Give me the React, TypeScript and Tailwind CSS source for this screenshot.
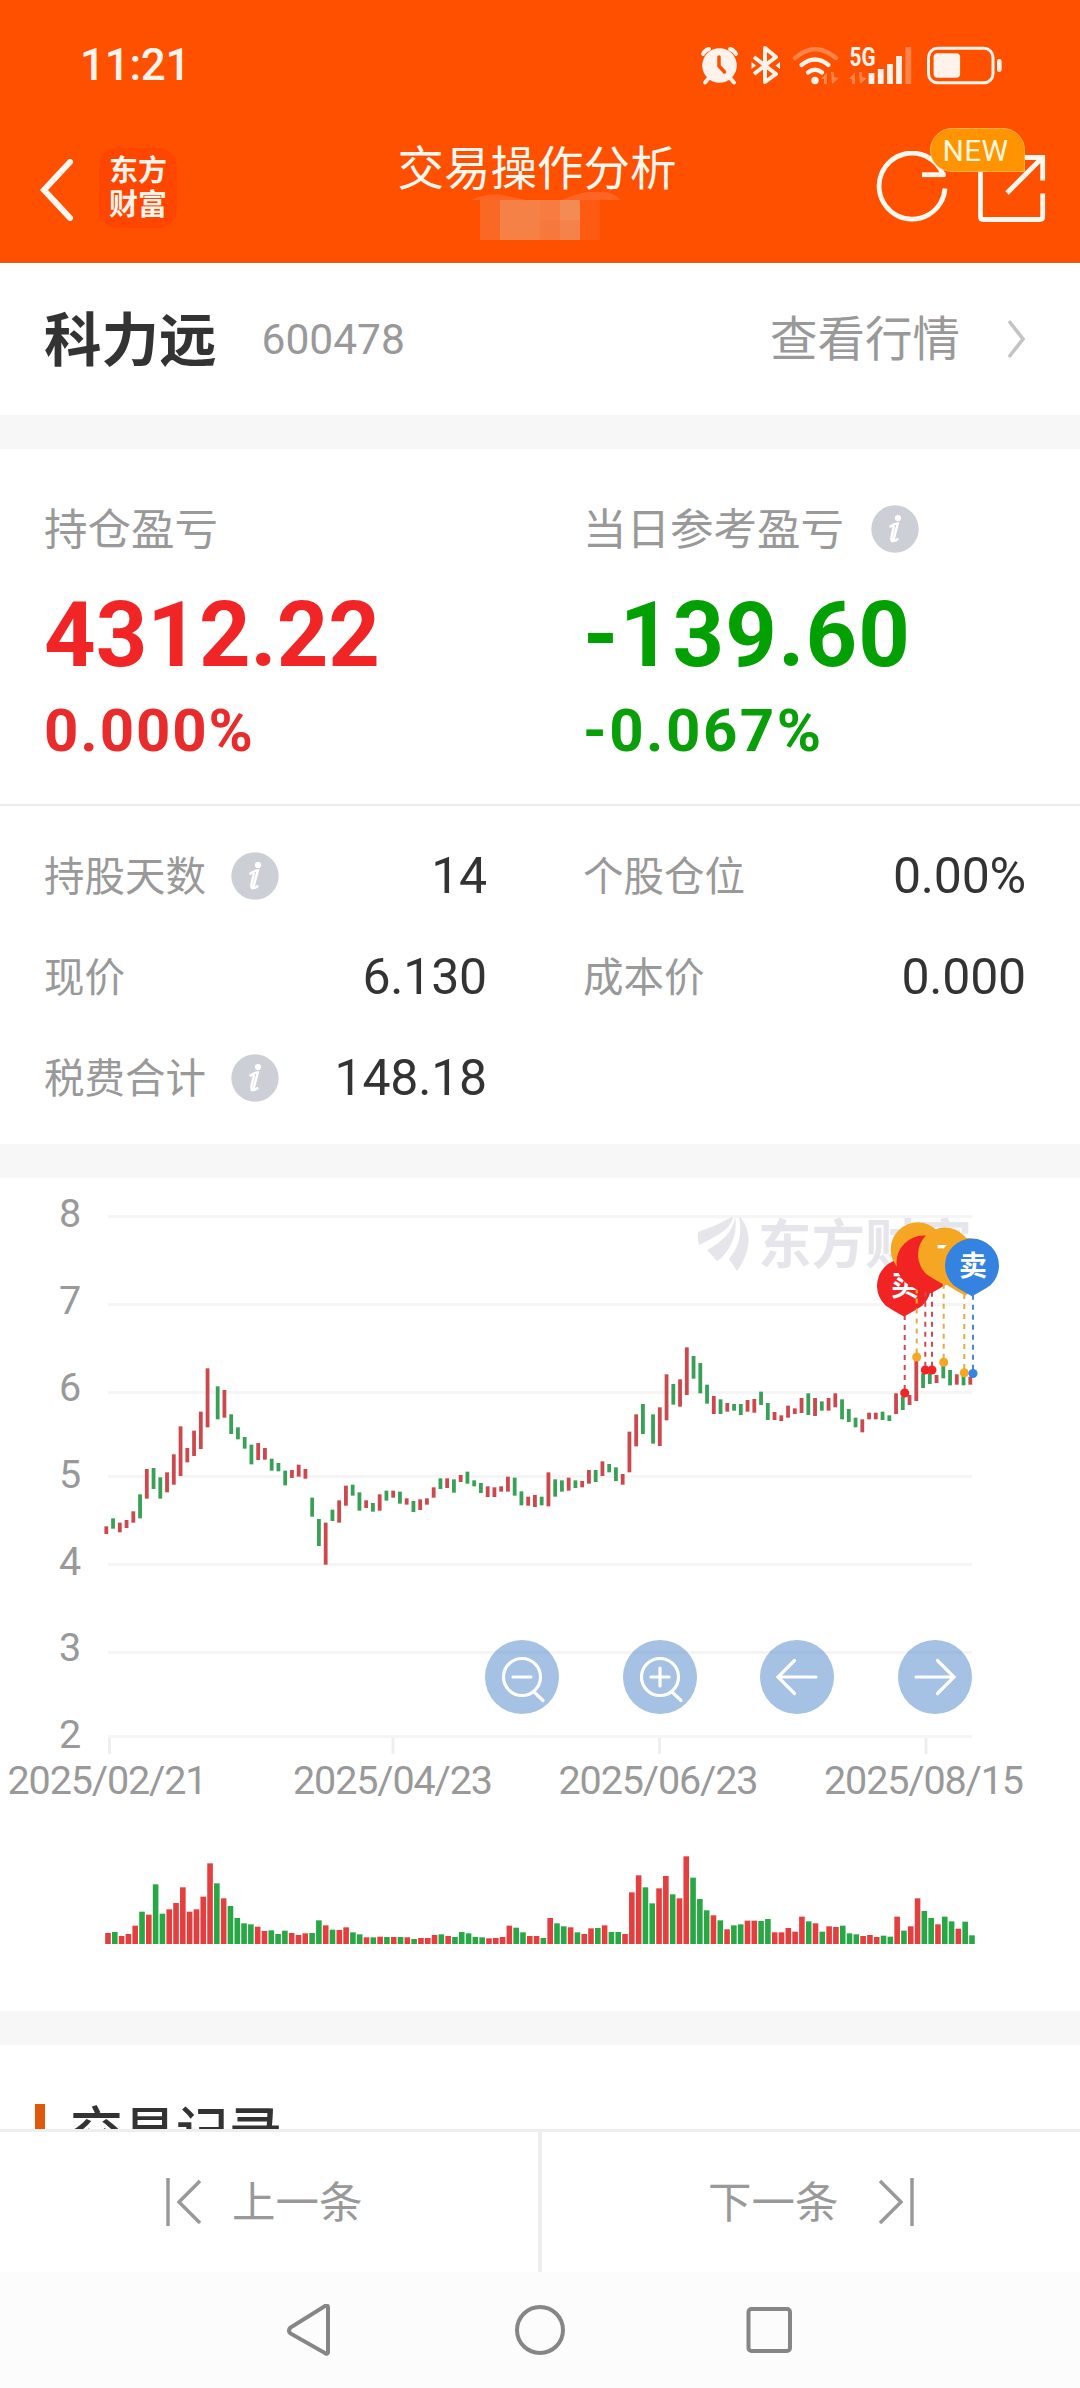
import { ReactNode } from "react";

// [máximo, mínimo, color] en tercios de pixel desde y = 1300
const velas: [number, number, "r" | "g"][] = [
  [679, 702, "r"], [655, 686, "g"], [668, 697, "r"], [660, 684, "r"], [634, 668, "r"], [583, 655, "g"], [507, 596, "r"], [504, 567, "g"],
  [532, 596, "g"], [517, 577, "r"], [463, 554, "r"], [379, 528, "r"], [444, 487, "r"], [392, 468, "r"], [335, 447, "r"], [205, 382, "r"],
  [259, 358, "g"], [270, 353, "r"], [343, 402, "g"], [382, 418, "g"], [411, 446, "g"], [434, 493, "g"], [429, 480, "r"], [444, 479, "r"],
  [476, 512, "g"], [489, 514, "g"], [512, 556, "g"], [510, 534, "r"], [494, 530, "r"], [507, 536, "r"], [593, 650, "g"], [657, 738, "g"],
  [668, 794, "r"], [629, 663, "g"], [601, 668, "r"], [557, 617, "r"], [554, 587, "g"], [577, 632, "g"], [601, 624, "r"], [609, 635, "g"],
  [583, 632, "r"], [572, 602, "g"], [572, 593, "r"], [575, 611, "g"], [595, 614, "r"], [603, 636, "g"], [598, 630, "r"], [595, 614, "r"],
  [562, 593, "r"], [535, 567, "g"], [535, 564, "r"], [538, 578, "g"], [525, 546, "r"], [515, 551, "g"], [541, 559, "g"], [549, 579, "g"],
  [559, 591, "r"], [562, 591, "r"], [559, 575, "r"], [530, 575, "r"], [533, 587, "g"], [574, 616, "g"], [590, 617, "r"], [585, 621, "r"],
  [590, 616, "g"], [517, 619, "r"], [538, 590, "g"], [541, 575, "g"], [533, 572, "r"], [541, 564, "g"], [543, 562, "r"], [510, 551, "r"],
  [510, 546, "g"], [484, 528, "r"], [492, 517, "g"], [502, 543, "g"], [522, 554, "r"], [395, 517, "r"], [343, 439, "r"], [312, 402, "g"],
  [343, 431, "g"], [322, 438, "r"], [223, 361, "r"], [252, 314, "g"], [238, 320, "r"], [142, 285, "r"], [168, 236, "g"], [189, 280, "g"],
  [254, 311, "g"], [288, 342, "r"], [298, 342, "g"], [309, 335, "r"], [312, 332, "g"], [312, 345, "g"], [300, 335, "r"], [297, 338, "r"],
  [275, 315, "g"], [309, 360, "g"], [336, 360, "r"], [346, 363, "r"], [317, 353, "r"], [325, 342, "r"], [294, 339, "r"], [280, 345, "g"],
  [294, 348, "r"], [304, 332, "g"], [294, 332, "r"], [280, 322, "r"], [298, 358, "g"], [327, 366, "g"], [353, 382, "g"], [358, 397, "r"],
  [338, 358, "r"], [338, 358, "r"], [335, 360, "g"], [346, 363, "g"], [280, 342, "r"], [290, 330, "g"], [285, 315, "r"], [180, 303, "r"],
  [220, 264, "g"], [220, 252, "g"], [225, 249, "r"], [195, 235, "g"], [210, 256, "g"], [223, 254, "r"], [225, 256, "g"], [230, 254, "r"],
];

const volumenes = [
  309, 306, 318, 312, 287, 245, 254, 163, 251, 238, 219, 172, 245, 238, 200, 100, 160, 205, 228, 264, 280, 283, 290, 303, 301, 312, 302, 309, 315, 310, 309, 271,
  286, 299, 300, 292, 307, 313, 322, 322, 320, 321, 321, 321, 322, 327, 324, 324, 315, 313, 318, 321, 306, 310, 321, 322, 325, 324, 321, 287, 293, 307, 318, 318,
  324, 264, 280, 289, 292, 307, 312, 295, 294, 286, 306, 306, 312, 187, 136, 172, 220, 175, 138, 193, 205, 79, 143, 207, 241, 256, 271, 298, 286, 283, 272, 272,
  273, 267, 307, 307, 294, 305, 260, 274, 280, 305, 289, 291, 287, 310, 313, 318, 315, 321, 317, 320, 260, 302, 289, 205, 243, 264, 283, 260, 274, 296, 275, 316,
];

const ejeY = [
  { valor: "8", linea: 1216.5, base: 1227 },
  { valor: "7", linea: 1304.5, base: 1314 },
  { valor: "6", linea: 1392.5, base: 1401 },
  { valor: "5", linea: 1476.5, base: 1488 },
  { valor: "4", linea: 1564.5, base: 1574.5 },
  { valor: "3", linea: 1652.5, base: 1661 },
  { valor: "2", linea: 1736.5, base: 1748 },
];

const ejeX = [
  { fecha: "2025/02/21", x: 7.5, marca: 109.5 },
  { fecha: "2025/04/23", x: 293, marca: 393 },
  { fecha: "2025/06/23", x: 558.5, marca: 659.5 },
  { fecha: "2025/08/15", x: 824, marca: 926 },
];

const operaciones = [
  { cx: 904, cy: 1286, x: 904.7, y: 1393, color: "#f22323", linea: "#d04a4c", texto: "买" },
  { cx: 917.7, cy: 1249.5, x: 916.7, y: 1357, color: "#f5a623", linea: "#e5ab45", texto: "T" },
  { cx: 923.5, cy: 1262.7, x: 925.3, y: 1370, color: "#f22323", linea: "#d04a4c", texto: "买" },
  { cx: 931, cy: 1262.7, x: 932, y: 1370, color: "#f22323", linea: "#d04a4c", texto: "" },
  { cx: 945, cy: 1254.7, x: 943.7, y: 1362.3, color: "#f5a623", linea: "#e5ab45", texto: "T" },
  { cx: 965, cy: 1265, x: 964.3, y: 1372.7, color: "#f5a623", linea: "#e5ab45", texto: "" },
  { cx: 972, cy: 1265.7, x: 973, y: 1373.5, color: "#3583e0", linea: "#4a88cf", texto: "卖" },
];

const xVela = (i: number) => 106.3 + i * 6.75 + (i > 15 ? 3.375 : 0) + (i > 79 ? 3.375 : 0);

const colorVolumen = (i: number) => (i === 52 || i === 127 || velas[i][2] === "g" ? "#28a745" : "#e53e3e");

const Info = () => (
  <svg className="h-[48px] w-[48px] shrink-0" viewBox="0 0 48 48">
    <circle cx="24" cy="24" r="23.7" fill="#ccd0d6" />
    <circle cx="27" cy="13" r="3.1" fill="#fff" />
    <path d="M19.5 21.5 C22 19.6 24.5 18.6 26.8 18.4 C25.6 24 23.6 29.5 22.8 34.5 C22.6 36.4 24 36 26.4 34.2 M22 36.2 C19.6 36 20.2 33 21 29.5 L22.8 22" stroke="#fff" strokeWidth="2.4" fill="none" strokeLinecap="round" />
  </svg>
);

const Franja = () => <div className="h-[34px] shrink-0 bg-[#f7f7f7]" />;

const BarraEstado = () => (
  <div className="flex h-[128px] items-start justify-between pl-[80px] pr-[77px] pt-[44px]">
    <span className="text-[44px] font-medium leading-[42px] tracking-[-0.3px] text-[#fff3ec]">11:21</span>
    <svg className="h-[42px] w-[304px]" viewBox="700 43 304 42" fill="none" stroke="#fff3ec">
      {/* alarma */}
      <g strokeWidth="4" strokeLinecap="round">
        <circle cx="720.5" cy="64.5" r="17.3" fill="#fff3ec" stroke="none" />
        <path d="M704 53 A9 9 0 0 1 710 48 M731 48 A9 9 0 0 1 737 53 M709 78 L706 81.5 M732 78 L735 81.5" />
        <path d="M720 56 V65 L725.5 71" stroke="#ff5000" strokeWidth="3.5" />
      </g>
      {/* bluetooth */}
      <path d="M755 56 L777 73 L766 81 V47 L777 56 L755 73" strokeWidth="4" strokeLinejoin="round" />
      <path d="M752.5 61 L757 64.5 L752.5 68 Z M781 61 L776.5 64.5 L781 68 Z" fill="#fff3ec" stroke="none" />
      {/* wifi */}
      <g strokeWidth="4.3" strokeLinecap="round">
        <path d="M796 57 Q816 39.5 837 57" stroke="#ff8449" />
        <path d="M802.5 64 Q816 53 829.5 64 M809 71.5 Q816 66 823 71.5" />
      </g>
      <circle cx="816" cy="79.5" r="3.7" fill="#fff3ec" stroke="none" />
      <path d="M822 78 L828 71 V83 H825 V78 Z M832 71 H835 V76 L840 77 L833 83 Z M850 78 L856 71 V83 H853 V78 Z M860 71 H863 V76 L868 77 L861 83 Z" fill="#ff8449" stroke="none" />
      <text x="850.5" y="64.5" fontSize="25" fontWeight="700" textLength="26" lengthAdjust="spacingAndGlyphs" fill="#fff3ec" stroke="none">5G</text>
      <g strokeWidth="5.8">
        <path d="M872.5 83 V72 M881.7 83 V68 M891 83 V63 M900 83 V55" />
        <path d="M909.3 83 V46" stroke="#ff8449" />
      </g>
      {/* bateria */}
      <rect x="929.5" y="47.3" width="64.5" height="34.5" rx="9" strokeWidth="3" />
      <rect x="934.6" y="52.3" width="26.5" height="24.5" rx="4" fill="#fff3ec" stroke="none" />
      <rect x="998" y="58" width="4.6" height="13" rx="2.2" fill="#fff3ec" stroke="none" />
    </svg>
  </div>
);

const Cabecera = () => (
  <header className="h-[263px] shrink-0 border-b border-[#c9642f] bg-[#ff5000] text-white">
    <BarraEstado />
    <div className="flex h-[134px] items-start justify-between pl-[38px] pr-[32px]">
      <div className="flex w-[288px] items-start gap-[23px] pt-5">
        <svg className="mt-[11px] h-[62px] w-[38px]" viewBox="0 0 38 62" fill="none" stroke="#fff8f2" strokeWidth="6">
          <path d="M32 3 L6 31 L32 59" strokeLinecap="round" />
        </svg>
        <div className="flex h-[80px] w-[78px] flex-col items-center justify-center rounded-[18px] bg-[#ff4600] text-[29px] font-bold leading-[34px] text-[#fff3ec]">
          <span>东方</span>
          <span>财富</span>
        </div>
      </div>
      <div className="flex flex-col items-center pt-[15px]">
        <h1 className="text-[46.5px] leading-[52px] text-[#fff8f0]">交易操作分析</h1>
        {/* nombre de la cuenta pixelado */}
        <svg className="-mt-[3px] ml-5 h-[48px] w-[150px]" viewBox="472 192 150 48">
          <path d="M472 200 Q480 194 500 194.5 L528 200.5 L562 200 Q590 188 606 192 Q618 195 620 200 Z" fill="#fe6525" />
          <rect x="480" y="200" width="20" height="40" fill="#fa6826" />
          <rect x="500" y="200" width="40" height="40" fill="#f68146" />
          <rect x="540" y="200" width="20" height="20" fill="#f67c42" />
          <rect x="540" y="220" width="20" height="20" fill="#f6783c" />
          <rect x="560" y="200" width="20" height="20" fill="#f48b55" />
          <rect x="560" y="220" width="20" height="20" fill="#f5824a" />
          <rect x="580" y="200" width="20" height="40" fill="#ff5a11" />
        </svg>
      </div>
      <div className="relative flex w-[300px] items-start justify-end gap-[26px] pt-[23px]">
        <svg className="h-[74px] w-[76px]" viewBox="875 151 76 74" fill="none" stroke="#fff8f0" strokeWidth="4.8">
          <path d="M944.5 176 A33 33 0 1 0 946 188.5" />
          <path d="M923 174.7 H946.5" />
        </svg>
        <svg className="h-[74px] w-[72px]" viewBox="976 151 72 74" fill="none" stroke="#fff8f0" strokeWidth="4.8">
          <path d="M1010 157 H980.5 V217 Q980.5 219.5 983 219.5 H1040 Q1042.7 219.5 1042.7 217 V193.5" />
          <path d="M1018 157.5 H1042.7 V180.5 M1007 193 L1042 158" />
        </svg>
        <span className="absolute right-[23px] top-0 flex h-[44px] w-[95px] items-center justify-center rounded-[22px] rounded-br-none border border-[#ffb04a] bg-[#ff9400] pr-[4px] pt-[2px] text-[30px] leading-none tracking-[0.3px] text-[#fff6dc]">NEW</span>
      </div>
    </div>
  </header>
);

const Dato = ({ etiqueta, valor, info }: { etiqueta: string; valor: string; info?: boolean }) => (
  <div className="flex h-[101px] items-center justify-between">
    <div className="flex items-center gap-[25px]">
      <span className="pt-[4px] text-[40.5px] leading-none text-[#999]">{etiqueta}</span>
      {info && <Info />}
    </div>
    <span className="text-[50px] leading-none tracking-[-0.2px] text-[#333]">{valor}</span>
  </div>
);

const Pin = ({ cx, cy, x, y, color, linea, texto }: (typeof operaciones)[number]) => (
  <g>
    <path d={`M${x} ${cy + 29} V${y}`} stroke={linea} strokeWidth="2" strokeDasharray="5 5" />
    <circle cx={x} cy={y} r="4.5" fill={color} />
    <path d={`M${cx} ${cy + 30.5} Q${cx - 12} ${cy + 24} ${cx - 18.5} ${cy + 19.5} A27 27 0 1 1 ${cx + 18.5} ${cy + 19.5} Q${cx + 12} ${cy + 24} ${cx} ${cy + 30.5} Z`} fill={color} />
    {texto && <text x={cx + 1} y={cy + 10} fontSize="28" fontWeight="700" textAnchor="middle" fill="#fff">{texto}</text>}
  </g>
);

const BotonGrafico = ({ children }: { children: ReactNode }) => (
  <button className="h-[74px] w-[74px] rounded-full bg-[#4b84c8]/50">
    <svg className="h-[74px] w-[74px]" viewBox="0 0 74 74" fill="none" stroke="#fff" strokeWidth="3.2" strokeLinecap="round">{children}</svg>
  </button>
);

const Grafico = () => (
  <section className="relative h-[833px] shrink-0">
    <svg className="h-[833px] w-[1080px]" viewBox="0 1178 1080 833">
      <defs>
        <clipPath id="area">
          <rect x="108" y="1217" width="864" height="520" />
        </clipPath>
      </defs>
      {ejeY.map(({ valor, linea, base }) => (
        <g key={valor}>
          <path d={`M108 ${linea} H972`} stroke="#f5f5f5" strokeWidth="3" />
          <text x="70" y={base} fontSize="39.5" textAnchor="middle" fill="#999">{valor}</text>
        </g>
      ))}
      {ejeX.map(({ fecha, x, marca }) => (
        <g key={fecha}>
          <path d={`M${marca} 1738 V1754`} stroke="#eeeeee" strokeWidth="3" />
          <text x={x} y="1794" fontSize="39.5" textLength="200" fill="#999">{fecha}</text>
        </g>
      ))}

      {/* marca de agua */}
      <g fill="#e5e5eb" clipPath="url(#area)">
        <path d="M698 1232 C712 1227 724 1222 733 1216 C732 1229 717 1236 699 1245 Q697 1238 698 1232 Z" />
        <path d="M707 1250 C722 1242 733 1232 735 1217 C738 1232 731 1252 717 1261 Z" />
        <path d="M739 1216 C750 1227 754 1247 737 1271 L729 1259 C740 1246 742 1232 739 1216 Z" />
        <text x="758" y="1263.5" fontSize="53.5" fontWeight="700">东方财富</text>
      </g>

      {velas.map(([max, min, color], i) => (
        <rect key={i} x={xVela(i) - 1.9} y={1300 + max / 3} width="3.8" height={(min - max) / 3} fill={color === "r" ? "#cd484c" : "#38a157"} />
      ))}
      {volumenes.map((v, i) => (
        <rect key={i} x={105.2 + i * 6.803} y={1830 + v / 3} width="5.6" height={(342 - v) / 3} fill={colorVolumen(i)} />
      ))}
      {operaciones.map((op) => (
        <Pin key={op.x} {...op} />
      ))}
    </svg>
    <div className="absolute left-[485px] top-[462px] flex gap-[63.5px]">
      <BotonGrafico>
        <circle cx="37" cy="37" r="18.5" />
        <path d="M28 37 H46 M48.5 51.5 L58 60.5" />
      </BotonGrafico>
      <BotonGrafico>
        <circle cx="37" cy="37" r="18.5" />
        <path d="M28 37 H46 M37 28 V46 M48.5 51.5 L58 60.5" />
      </BotonGrafico>
      <BotonGrafico>
        <path d="M56 37 H18 M34.5 20.5 L18 37 L34.5 53.5" />
      </BotonGrafico>
      <BotonGrafico>
        <path d="M18 37 H56 M39.5 20.5 L56 37 L39.5 53.5" />
      </BotonGrafico>
    </div>
  </section>
);

const App = () => {
  return (
    <div className="flex h-[2388px] w-[1080px] flex-col overflow-hidden bg-white font-[Roboto,'Noto_Sans_CJK_SC',sans-serif]">
      <Cabecera />

      <section className="flex h-[152px] shrink-0 items-center pl-[44px] pr-[53px]">
        <h2 className="pt-[5px] text-[57.5px] font-bold leading-none text-[#333]">科力远</h2>
        <span className="ml-[45px] pt-[2px] text-[42.5px] leading-none text-[#999]">600478</span>
        <span className="ml-auto pt-[4px] text-[47.5px] leading-none text-[#999]">查看行情</span>
        <svg className="ml-[45px] h-[42px] w-[22px]" viewBox="0 0 22 42" fill="none" stroke="#c4c4c4" strokeWidth="3.6">
          <path d="M4 3 L18 21 L4 39" />
        </svg>
      </section>

      <Franja />

      <section className="grid h-[355px] shrink-0 grid-cols-2 pl-[44px]">
        <div className="pt-[56px]">
          <div className="flex h-[48px] items-center pt-[4px] text-[43.5px] leading-none text-[#999]">持仓盈亏</div>
          <div className="mt-[38px] text-[90px] font-bold leading-[90px] text-[#f12525]">4312.22</div>
          <div className="mt-[20px] text-[60px] font-bold leading-[60px] tracking-[1.9px] text-[#e92b2b]">0.000%</div>
        </div>
        <div className="pl-[21px] pt-[56px]">
          <div className="flex h-[48px] items-center gap-[27px] text-[43.5px] leading-none text-[#999]">
            <span className="pt-[4px]">当日参考盈亏</span>
            <Info />
          </div>
          <div className="mt-[38px] text-[90px] font-bold leading-[90px] tracking-[1.2px] text-[#03a003]">-139.60</div>
          <div className="mt-[20px] text-[60px] font-bold leading-[60px] tracking-[2.5px] text-[#089f08]">-0.067%</div>
        </div>
      </section>

      <section className="grid h-[340px] shrink-0 grid-cols-2 content-start border-t-2 border-[#ececec] pl-[44px] pr-[54px] pt-[19px]">
        <div className="w-[443px]">
          <Dato etiqueta="持股天数" valor="14" info />
          <Dato etiqueta="现价" valor="6.130" />
          <Dato etiqueta="税费合计" valor="148.18" info />
        </div>
        <div className="ml-auto w-[443px]">
          <Dato etiqueta="个股仓位" valor="0.00%" />
          <Dato etiqueta="成本价" valor="0.000" />
        </div>
      </section>

      <Franja />
      <Grafico />
      <Franja />

      <section className="flex h-[84px] shrink-0 items-start gap-[25px] overflow-hidden pl-[35px] pt-[59px]">
        <div className="h-[48px] w-[10px] shrink-0 bg-[#e0580c]" />
        <h3 className="mt-[2px] text-[53px] font-medium leading-[54px] text-[#333]">交易记录</h3>
      </section>

      <div className="flex h-[143px] shrink-0 border-t-[3px] border-[#eee] text-[43.5px] leading-none text-[#999]">
        <button className="flex w-[542px] items-center gap-[30px] border-r-[4px] border-[#eee] pl-[165px]">
          <svg className="h-[48px] w-[37px]" viewBox="0 0 37 48" fill="none" stroke="#999" strokeWidth="3.5">
            <path d="M3 0 V48 M35 3 L14 24 L35 45" />
          </svg>
          <span className="pt-[3px]">上一条</span>
        </button>
        <button className="flex items-center gap-[39px] pl-[166px]">
          <span className="pt-[3px]">下一条</span>
          <svg className="h-[48px] w-[37px]" viewBox="0 0 37 48" fill="none" stroke="#999" strokeWidth="3.5">
            <path d="M34 0 V48 M2 3 L23 24 L2 45" />
          </svg>
        </button>
      </div>

      <nav className="flex flex-1 items-start justify-center bg-[#fcfcfc] pt-[32px]">
        <svg className="h-[54px] w-[508px]" viewBox="286 2304 508 54" fill="none" stroke="#868686" strokeWidth="4">
          <path d="M328 2307.5 V2352.5 Q327 2355 325 2353 L290.5 2333.5 Q287.5 2330.5 290.5 2327.5 L325 2306 Q328 2304.5 328 2307.5 Z" />
          <circle cx="540" cy="2330" r="23" />
          <rect x="748.5" y="2309" width="41.5" height="42" rx="3" />
        </svg>
      </nav>
    </div>
  );
};

export default App;
